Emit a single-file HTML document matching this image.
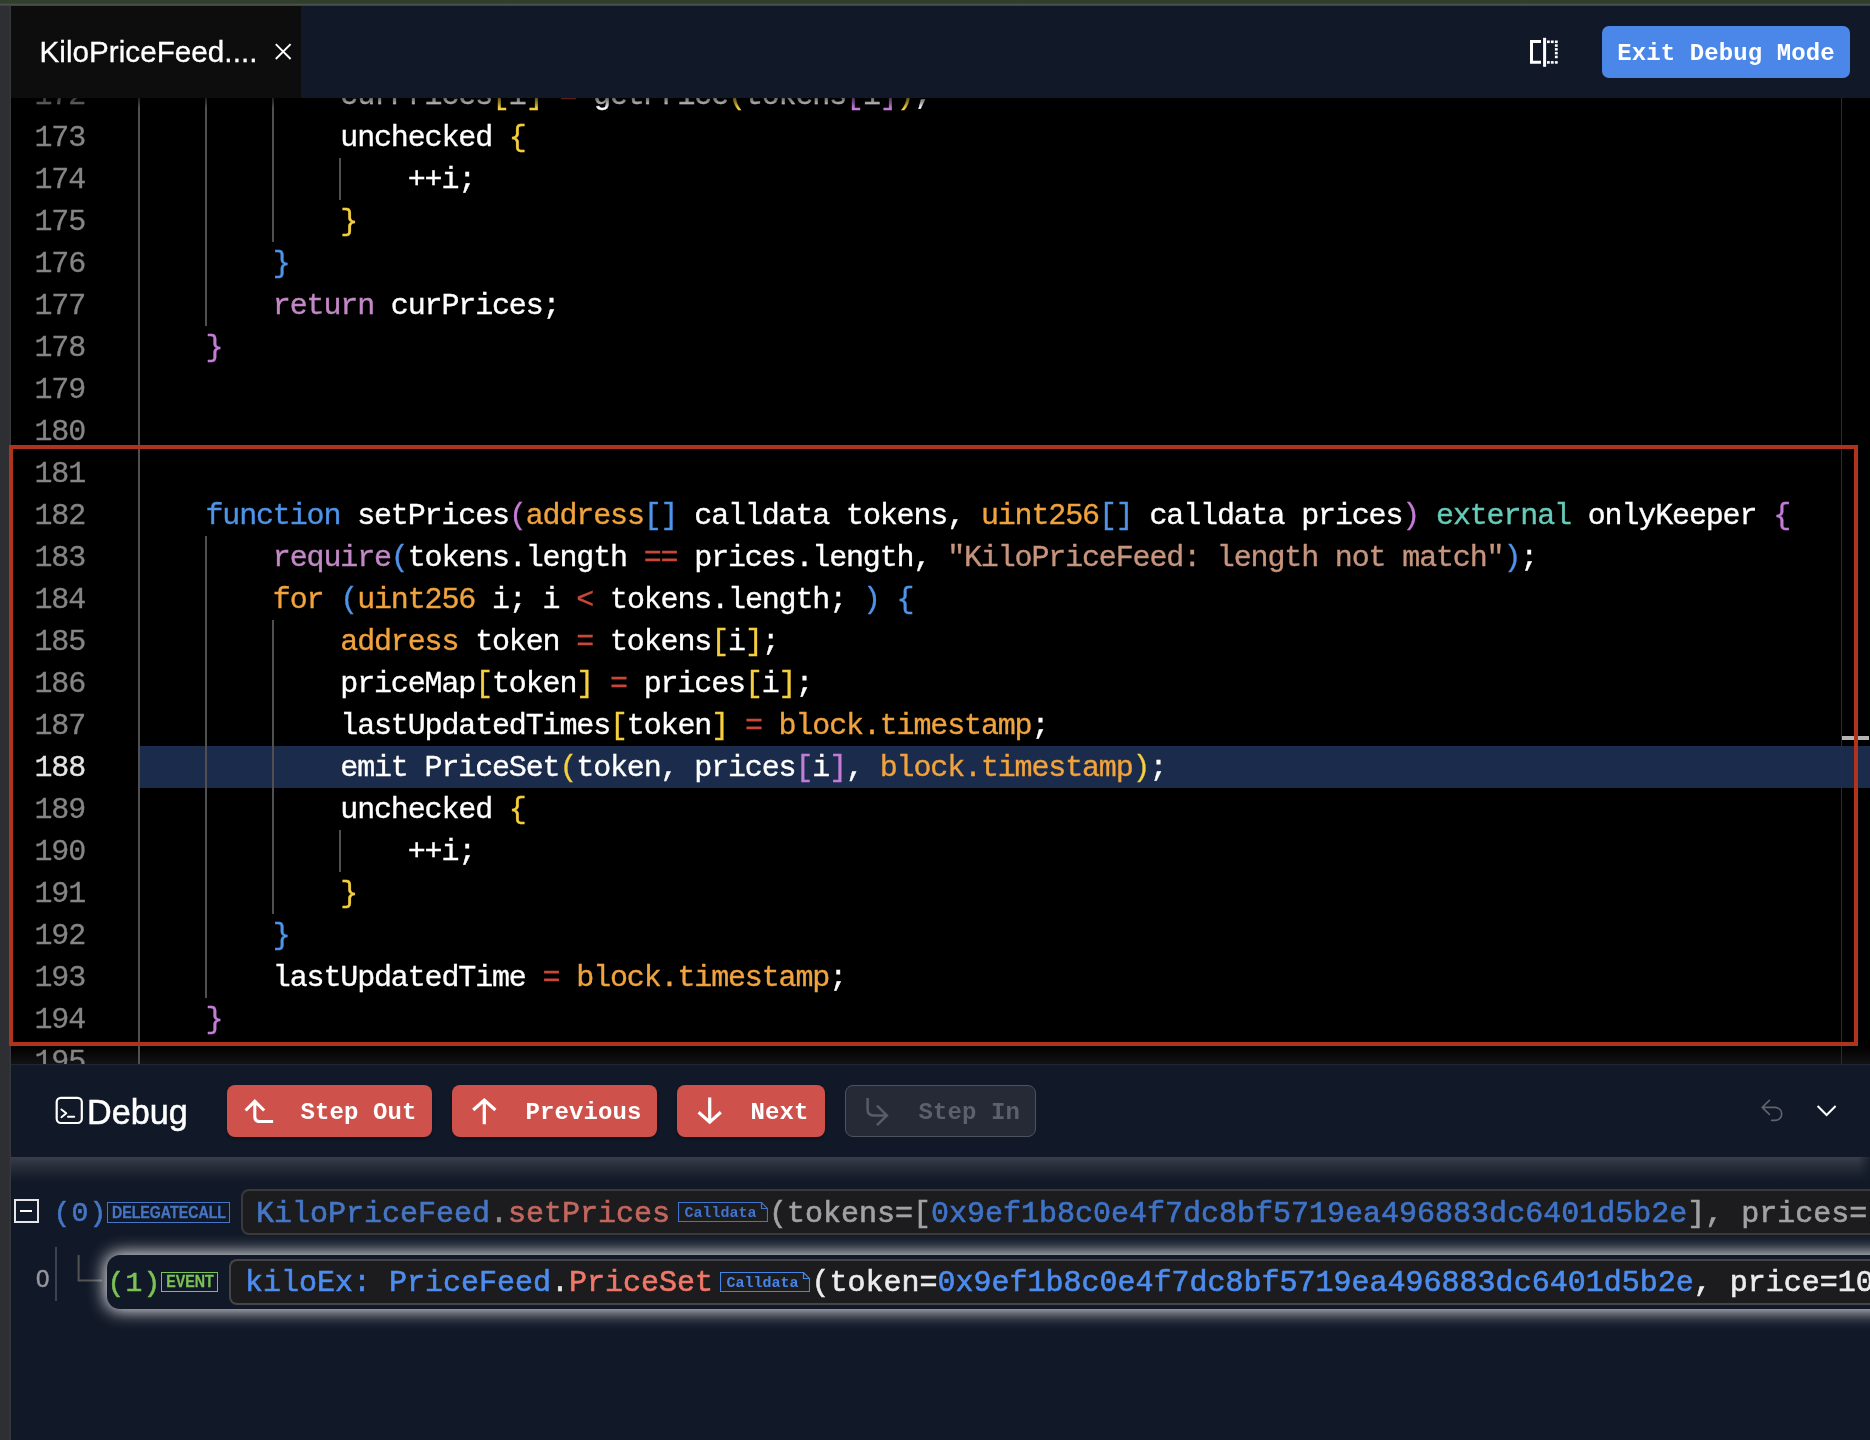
<!DOCTYPE html>
<html><head><meta charset="utf-8">
<style>
*{box-sizing:border-box;margin:0;padding:0}
html,body{width:1870px;height:1440px;overflow:hidden;background:#000}
body{position:relative;font-family:"Liberation Sans",sans-serif}
#root{position:absolute;left:0;top:0;width:1870px;height:1440px;will-change:transform}
.abs{position:absolute}
#topstrip{left:0;top:0;width:1870px;height:6px;background:linear-gradient(#2f3f2c 0,#2f3f2c 3px,#4a4f4a 4.5px,#3a3d3a 6px)}
#leftstrip{left:0;top:6px;width:11px;height:1434px;background:linear-gradient(90deg,#2e2f33 0,#2e2f33 9px,#3a3b3f 11px)}
#tabbar{left:11px;top:6px;width:1859px;height:92px;background:#111827}
#tab{left:11px;top:6px;width:290px;height:92px;background:#0d0d0d}
#tabtxt{left:39.5px;top:36px;font-size:29.6px;color:#fff;line-height:32px;white-space:nowrap;-webkit-text-stroke:0.3px;letter-spacing:0.05px}
#exitbtn{left:1602px;top:26px;width:248px;height:52px;background:#4b87e8;border-radius:7px;color:#fff;font:bold 24px/56px "Liberation Mono",monospace;letter-spacing:.1px;text-align:center;white-space:nowrap}
#editor{left:11px;top:98px;width:1859px;height:966px;background:#000;overflow:hidden}
.mono{font-family:"Liberation Mono",monospace}
.ln{position:absolute;left:0;width:74px;text-align:right;font:30px/42px "Liberation Mono",monospace;letter-spacing:-1.146px;color:#858585;height:42px;padding-top:1px;-webkit-text-stroke:0.3px}
.cl{position:absolute;left:127px;font:30px/42px "Liberation Mono",monospace;letter-spacing:-1.146px;color:#fff;height:42px;white-space:pre;padding-top:1px;-webkit-text-stroke:0.35px}
.guide{position:absolute;width:1px;background:#3a3a3a}
.ln.cur{color:#e4e4e4}
#hl{left:127px;top:648px;width:1732px;height:42px;background:#1b2b4b}
#redbox{left:9px;top:445px;width:1849px;height:601px;border:4px solid #ae341d}
.k{color:#4e94e8}.p{color:#c57cd8}.o{color:#f1a33e}.t{color:#66ccba}.r{color:#c9483a}.s{color:#c7957d}.y{color:#f5cf3f}.b{color:#4e94e8}.q{color:#c289c6}
#dbgbar{left:11px;top:1064px;width:1859px;height:93px;background:#111827}
#trace{left:11px;top:1157px;width:1859px;height:283px;background:#111827}
.btn{position:absolute;top:1085px;height:52px;border-radius:8px;background:#cf514b;color:#fff;font:bold 24px/55px "Liberation Mono",monospace;letter-spacing:.1px;white-space:nowrap;overflow:hidden;box-shadow:0 2px 3px rgba(0,0,0,.25)}

#edshadow{left:0;top:948px;width:1859px;height:18px;background:linear-gradient(#000,#131313)}
#edtop{left:0;top:0;width:1859px;height:10px;background:linear-gradient(rgba(0,0,0,.6),rgba(0,0,0,.35) 50%,rgba(0,0,0,0))}
#vsep{left:1841px;top:98px;width:1px;height:966px;background:#2c2c2c}
#ovmark{left:1842px;top:736px;width:27px;height:4px;background:#b4b4b4}
#dbgbar{border-top:1px solid #1f2735}
#dbgtxt{-webkit-text-stroke:0.5px;left:87px;top:1092px;font-size:34.2px;line-height:40px;color:#fff;white-space:nowrap}
.btn .lbl{position:absolute;top:0;left:0}
#b4{background:#252a36;border:1px solid #4d525c;color:#5b606c;line-height:53px;box-shadow:none}
#traceband{left:11px;top:1157px;width:1859px;height:25px;background:linear-gradient(rgba(255,255,255,.165),rgba(255,255,255,.1) 33%,rgba(255,255,255,.04) 70%,rgba(255,255,255,0) 100%)}
#tracebandr{left:1858px;top:1157px;width:12px;height:25px;background:linear-gradient(90deg,rgba(17,24,39,0),rgba(17,24,39,.75))}
.tt{position:absolute;font:30px/34px "Liberation Mono",monospace;white-space:pre;-webkit-text-stroke:0.6px}
.box{position:absolute;background:#1c1c1e;border:2px solid #39393b;border-right:0;border-radius:8px 0 0 8px}
.badge{-webkit-text-stroke:.3px;position:absolute;border:1px solid;font:bold 16px/18px "Liberation Sans",sans-serif;text-align:center;white-space:nowrap;overflow:visible}
.badge span{display:inline-block;transform-origin:0 50%}
.cd{position:absolute;width:90px;height:20px}
.cd text{font:bold 15px "Liberation Mono",monospace}
#sel{left:107px;top:1255px;width:1800px;height:54px;border-radius:13px;background:#111827;box-shadow:0 0 17px 2px rgba(255,255,255,.9)}
</style></head><body><div id="root">
<div id="topstrip" class="abs"></div>
<div id="leftstrip" class="abs"></div>
<div id="tabbar" class="abs"></div>
<div id="tab" class="abs"></div>
<div id="tabtxt" class="abs">KiloPriceFeed....</div>
<div id="exitbtn" class="abs">Exit Debug Mode</div>
<div id="editor" class="abs">
<div id="edshadow" class="abs"></div>
<div class="abs" id="hl" style="top:648px"></div>
<div class="guide" style="left:127px;top:0px;height:1026px;background:#505050;width:1.5px"></div>
<div class="guide" style="left:194px;top:0px;height:228px;background:#505050;width:1.5px"></div>
<div class="guide" style="left:261px;top:0px;height:144px;background:#505050;width:1.5px"></div>
<div class="guide" style="left:328px;top:60px;height:42px;background:#505050;width:1.5px"></div>
<div class="guide" style="left:194px;top:438px;height:462px;background:#505050;width:1.5px"></div>
<div class="guide" style="left:261px;top:522px;height:294px;background:#505050;width:1.5px"></div>
<div class="guide" style="left:328px;top:732px;height:42px;background:#505050;width:1.5px"></div>
<div class="ln" style="top:-24px">172</div>
<div class="cl" style="top:-24px"><span class="w">            curPrices</span><span class="y">[</span><span class="w">i</span><span class="y">]</span><span class="w"> </span><span class="r">=</span><span class="w"> getPrice</span><span class="y">(</span><span class="w">tokens</span><span class="p">[</span><span class="w">i</span><span class="p">]</span><span class="y">)</span><span class="w">;</span></div>
<div class="ln" style="top:18px">173</div>
<div class="cl" style="top:18px"><span class="w">            unchecked </span><span class="y">{</span></div>
<div class="ln" style="top:60px">174</div>
<div class="cl" style="top:60px"><span class="w">                ++i;</span></div>
<div class="ln" style="top:102px">175</div>
<div class="cl" style="top:102px"><span class="w">            </span><span class="y">}</span></div>
<div class="ln" style="top:144px">176</div>
<div class="cl" style="top:144px"><span class="w">        </span><span class="b">}</span></div>
<div class="ln" style="top:186px">177</div>
<div class="cl" style="top:186px"><span class="w">        </span><span class="q">return</span><span class="w"> curPrices;</span></div>
<div class="ln" style="top:228px">178</div>
<div class="cl" style="top:228px"><span class="w">    </span><span class="p">}</span></div>
<div class="ln" style="top:270px">179</div>
<div class="ln" style="top:312px">180</div>
<div class="ln" style="top:354px">181</div>
<div class="ln" style="top:396px">182</div>
<div class="cl" style="top:396px"><span class="w">    </span><span class="k">function</span><span class="w"> setPrices</span><span class="p">(</span><span class="o">address</span><span class="b">[]</span><span class="w"> calldata tokens, </span><span class="o">uint256</span><span class="b">[]</span><span class="w"> calldata prices</span><span class="p">)</span><span class="w"> </span><span class="t">external</span><span class="w"> onlyKeeper </span><span class="p">{</span></div>
<div class="ln" style="top:438px">183</div>
<div class="cl" style="top:438px"><span class="w">        </span><span class="q">require</span><span class="b">(</span><span class="w">tokens.length </span><span class="r">==</span><span class="w"> prices.length, </span><span class="s">&quot;KiloPriceFeed: length not match&quot;</span><span class="b">)</span><span class="w">;</span></div>
<div class="ln" style="top:480px">184</div>
<div class="cl" style="top:480px"><span class="w">        </span><span class="o">for</span><span class="w"> </span><span class="b">(</span><span class="o">uint256</span><span class="w"> i; i </span><span class="r">&lt;</span><span class="w"> tokens.length; </span><span class="b">)</span><span class="w"> </span><span class="b">{</span></div>
<div class="ln" style="top:522px">185</div>
<div class="cl" style="top:522px"><span class="w">            </span><span class="o">address</span><span class="w"> token </span><span class="r">=</span><span class="w"> tokens</span><span class="y">[</span><span class="w">i</span><span class="y">]</span><span class="w">;</span></div>
<div class="ln" style="top:564px">186</div>
<div class="cl" style="top:564px"><span class="w">            priceMap</span><span class="y">[</span><span class="w">token</span><span class="y">]</span><span class="w"> </span><span class="r">=</span><span class="w"> prices</span><span class="y">[</span><span class="w">i</span><span class="y">]</span><span class="w">;</span></div>
<div class="ln" style="top:606px">187</div>
<div class="cl" style="top:606px"><span class="w">            lastUpdatedTimes</span><span class="y">[</span><span class="w">token</span><span class="y">]</span><span class="w"> </span><span class="r">=</span><span class="w"> </span><span class="o">block.timestamp</span><span class="w">;</span></div>
<div class="ln cur" style="top:648px">188</div>
<div class="cl" style="top:648px"><span class="w">            emit PriceSet</span><span class="y">(</span><span class="w">token, prices</span><span class="p">[</span><span class="w">i</span><span class="p">]</span><span class="w">, </span><span class="o">block.timestamp</span><span class="y">)</span><span class="w">;</span></div>
<div class="ln" style="top:690px">189</div>
<div class="cl" style="top:690px"><span class="w">            unchecked </span><span class="y">{</span></div>
<div class="ln" style="top:732px">190</div>
<div class="cl" style="top:732px"><span class="w">                ++i;</span></div>
<div class="ln" style="top:774px">191</div>
<div class="cl" style="top:774px"><span class="w">            </span><span class="y">}</span></div>
<div class="ln" style="top:816px">192</div>
<div class="cl" style="top:816px"><span class="w">        </span><span class="b">}</span></div>
<div class="ln" style="top:858px">193</div>
<div class="cl" style="top:858px"><span class="w">        lastUpdatedTime </span><span class="r">=</span><span class="w"> </span><span class="o">block.timestamp</span><span class="w">;</span></div>
<div class="ln" style="top:900px">194</div>
<div class="cl" style="top:900px"><span class="w">    </span><span class="p">}</span></div>
<div class="ln" style="top:942px">195</div>
<div id="edtop" class="abs"></div>
</div>
<div id="vsep" class="abs"></div><div id="ovmark" class="abs"></div>
<div id="redbox" class="abs"></div>
<div id="dbgbar" class="abs"></div>
<div id="trace" class="abs"></div><div id="traceband" class="abs"></div><div id="tracebandr" class="abs"></div>
<div id="dbgtxt" class="abs">Debug</div>
<div class="btn" id="b1" style="left:227px;width:205px;"><span class="lbl" style="left:73.5px">Step Out</span></div>
<div class="btn" id="b2" style="left:452px;width:205px;"><span class="lbl" style="left:73.5px">Previous</span></div>
<div class="btn" id="b3" style="left:677px;width:148px;"><span class="lbl" style="left:73.5px">Next</span></div>
<div class="btn" id="b4" style="left:845px;width:191px;"><span class="lbl" style="left:72.5px">Step In</span></div>
<svg class="abs" style="left:0;top:0;pointer-events:none" width="1870" height="1440" viewBox="0 0 1870 1440"><path d="M275.8 44.2 L290.6 59 M290.6 44.2 L275.8 59" stroke="#fff" stroke-width="1.9" fill="none" stroke-linecap="butt"/>
<path d="M1541 41.4 H1531.5 V62.2 H1541" stroke="#fff" stroke-width="3" fill="none"/>
<rect x="1543.1" y="37.8" width="3" height="29" fill="#fff"/>
<rect x="1547" y="40.5" width="2.8" height="2.6" fill="#fff"/>
<rect x="1547" y="61.1" width="2.8" height="2.6" fill="#fff"/>
<rect x="1550.9" y="40.5" width="2.8" height="2.6" fill="#fff"/>
<rect x="1550.9" y="61.1" width="2.8" height="2.6" fill="#fff"/>
<rect x="1554.9" y="40.5" width="2.8" height="2.6" fill="#fff"/>
<rect x="1554.9" y="61.1" width="2.8" height="2.6" fill="#fff"/>
<rect x="1554.9" y="44.3" width="2.8" height="2.5" fill="#fff"/>
<rect x="1554.9" y="48.1" width="2.8" height="2.5" fill="#fff"/>
<rect x="1554.9" y="51.9" width="2.8" height="2.5" fill="#fff"/>
<rect x="1554.9" y="55.7" width="2.8" height="2.5" fill="#fff"/>
<rect x="56.7" y="1097.9" width="25.1" height="25.1" rx="4.2" stroke="#fff" stroke-width="2.2" fill="none"/>
<path d="M61.4 1109.4 L66.3 1113.3 L61.4 1117.2" stroke="#fff" fill="none" stroke-linecap="round" stroke-linejoin="round" stroke-width="1.9"/>
<path d="M68 1116.7 H74.2" stroke="#fff" fill="none" stroke-linecap="round" stroke-linejoin="round" stroke-width="2"/>
<path d="M245.6 1110.5 L254.8 1101.3 L264.2 1110.5 M254.8 1101.5 V1116.6 Q254.8 1121.5 259.7 1121.5 H273.1" stroke="#fff" stroke-width="3.1" fill="none" stroke-linecap="butt" stroke-linejoin="miter"/>
<path d="M473.2 1110 L484.3 1100.2 L495.4 1110 M484.3 1100.4 V1124.3" stroke="#fff" stroke-width="3.2" fill="none"/>
<path d="M698.6 1112.3 L709.7 1122.1 L720.8 1112.3 M709.7 1121.9 V1097.6" stroke="#fff" stroke-width="3.2" fill="none"/>
<path d="M867.6 1098 V1109.5 Q867.6 1115.4 873.5 1115.4 H887 M877 1105.6 L886.9 1115.4 L877 1125.2" stroke="#575c68" stroke-width="2.5" fill="none"/>
<path d="M1769.4 1100.4 L1762.2 1107.4 L1769.4 1114.4 M1762.4 1107.4 H1775.2 A6.5 6.5 0 0 1 1775.2 1120.4 H1771.6" stroke="#60646e" stroke-width="1.6" fill="none" stroke-linecap="round" stroke-linejoin="round"/>
<path d="M1817.6 1106 L1826.6 1115 L1835.6 1106" stroke="#fff" stroke-width="2" fill="none"/></svg>
<div class="abs" style="left:13.5px;top:1198.5px;width:25px;height:24.5px;border:2px solid #e6e6e6"></div>
<div class="abs" style="left:20.3px;top:1209.8px;width:11.6px;height:2px;background:#fff"></div>
<div class="tt" style="left:53.6px;top:1197px;font-size:28px;letter-spacing:1.2px;color:#4676c4">(0)</div>
<div class="badge" style="left:107px;top:1202px;width:123px;height:20.5px;border-color:#4676c4;color:#4676c4;font-size:16.5px;line-height:18.5px"><span style="position:absolute;left:50%;top:0;transform:translateX(-50%) scaleX(0.86);transform-origin:50% 50%">DELEGATECALL</span></div>
<div class="box" style="left:241px;top:1189px;width:1640px;height:46px"></div>
<div class="tt" style="left:256px;top:1196.5px"><span style="color:#4676c4">KiloPriceFeed</span><span style="color:#8f8f92">.</span><span style="color:#c2675f">setPrices</span></div>
<svg class="cd" style="left:677.5px;top:1202px" viewBox="0 0 90 20"><path d="M0.5 0.5 H83.5 L89.5 6.5 V19.5 H0.5 Z M83.5 0.5 V6.5 H89.5" fill="none" stroke="#3f74cf" stroke-width="1.2"/><text x="6.5" y="15" fill="#3f74cf">Calldata</text></svg>
<div class="tt" style="left:769px;top:1196.5px"><span style="color:#a2a2a4">(tokens=[</span><span style="color:#3f73c8">0x9ef1b8c0e4f7dc8bf5719ea496883dc6401d5b2e</span><span style="color:#a2a2a4">], prices=[1</span></div>
<div class="abs" style="left:36px;top:1264.5px;font:24px/28px 'Liberation Sans',sans-serif;color:#97979b;-webkit-text-stroke:.5px">0</div>
<div class="abs" style="left:54.8px;top:1247px;width:2.2px;height:54px;background:#3b4250"></div>
<svg class="abs" style="left:70px;top:1250px" width="40" height="40"><path d="M8.6 5 V30.6 H32" stroke="#525355" stroke-width="2" fill="none"/></svg>
<div class="abs" id="sel"></div>
<div class="tt" style="left:107.6px;top:1266.5px;font-size:28px;letter-spacing:1.2px;color:#7cc254">(1)</div>
<div class="badge" style="left:161px;top:1272px;width:57px;height:19.6px;border-color:#7cc254;color:#7cc254;font-size:16.5px;line-height:17.6px"><span style="position:absolute;left:50%;top:0;transform:translateX(-50%) scaleX(0.86);transform-origin:50% 50%">EVENT</span></div>
<div class="box" style="left:229px;top:1259px;width:1650px;height:46px;border-color:#454547"></div>
<div class="tt" style="left:245px;top:1266px"><span style="color:#4d8df0">kiloEx: PriceFeed</span><span style="color:#e6e6e6">.</span><span style="color:#f07868">PriceSet</span></div>
<svg class="cd" style="left:719.5px;top:1272px" viewBox="0 0 90 20"><path d="M0.5 0.5 H83.5 L89.5 6.5 V19.5 H0.5 Z M83.5 0.5 V6.5 H89.5" fill="none" stroke="#4585e8" stroke-width="1.2"/><text x="6.5" y="15" fill="#4585e8">Calldata</text></svg>
<div class="tt" style="left:811.5px;top:1266px"><span style="color:#ececec">(token=</span><span style="color:#4d8df0">0x9ef1b8c0e4f7dc8bf5719ea496883dc6401d5b2e</span><span style="color:#ececec">, price=100</span></div>
</div></body></html>
